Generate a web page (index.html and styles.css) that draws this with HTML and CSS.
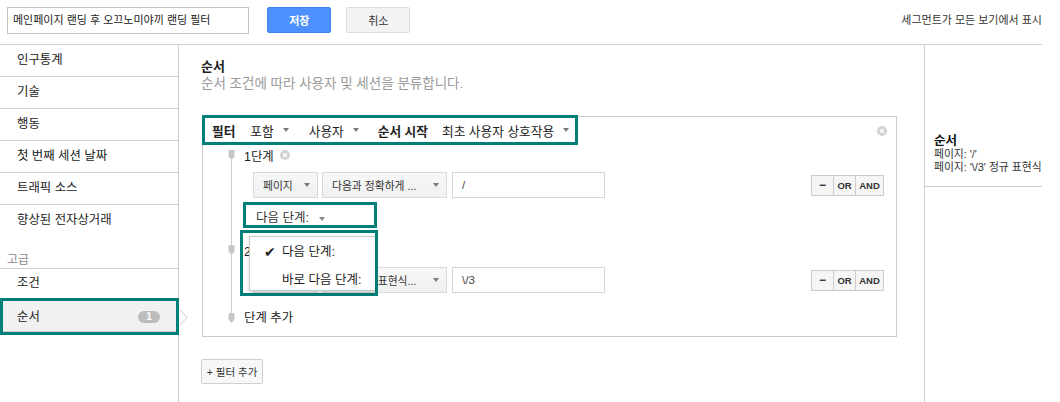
FILE: index.html
```html
<!DOCTYPE html>
<html lang="ko">
<head>
<meta charset="utf-8">
<title>세그먼트 편집</title>
<link rel="stylesheet" href="styles.css">
</head>
<body>
<div class="app">
  <header class="topbar">
    <div class="name-input">메인페이지 랜딩 후 오끄노미야끼 랜딩 필터</div>
    <button class="btn btn-primary">저장</button>
    <button class="btn btn-cancel">취소</button>
    <div class="top-note">세그먼트가 모든 보기에서 표시</div>
  </header>
  <div class="body">
    <nav class="sidebar">
      <div class="nav-item">인구통계</div>
      <div class="nav-item">기술</div>
      <div class="nav-item">행동</div>
      <div class="nav-item">첫 번째 세션 날짜</div>
      <div class="nav-item">트래픽 소스</div>
      <div class="nav-item nav-last">향상된 전자상거래</div>
      <div class="nav-group">고급</div>
      <div class="nav-item nav-cond">조건</div>
      <div class="nav-item nav-selected">
        <span>순서</span>
        <span class="badge">1</span>
        <svg class="chevron" width="9" height="17" viewBox="0 0 9 17"><polyline points="0.5,0.5 8,8.5 0.5,16.5" fill="#fff" stroke="#c8c8c8" stroke-width="1"/></svg>
      </div>
    </nav>

    <main class="main">
      <h1 class="title">순서</h1>
      <p class="subtitle">순서 조건에 따라 사용자 및 세션을 분류합니다.</p>

      <section class="panel">
        <div class="filter-head">
          <span class="strong">필터</span>
          <span class="hsel h-include">포함<i class="caret"></i></span>
          <span class="hsel h-user">사용자<i class="caret"></i></span>
          <span class="strong h-start">순서 시작</span>
          <span class="hsel h-first">최초 사용자 상호작용<i class="caret"></i></span>
        </div>
        <svg class="panel-close" width="10" height="10" viewBox="0 0 10 10"><circle cx="5" cy="5" r="5" fill="#d3d3d3"/><path d="M3.2 3.2 L6.8 6.8 M6.8 3.2 L3.2 6.8" stroke="#fff" stroke-width="1.3"/></svg>

        <div class="steps">
          <div class="step step-first">
            <div class="rail">
              <span class="seg-top"></span>
              <svg class="marker" width="7" height="10" viewBox="0 0 7 10"><path d="M0.5 1 Q0.5 0 1.5 0 L5.5 0 Q6.5 0 6.5 1 L6.5 6.5 L3.5 10 L0.5 6.5 Z" fill="#c6c6c6"/></svg>
              <span class="seg"></span>
            </div>
            <div class="step-body">
              <div class="step-title">1단계<svg class="x-icon" width="10" height="10" viewBox="0 0 10 10"><circle cx="5" cy="5" r="5" fill="#d3d3d3"/><path d="M3.2 3.2 L6.8 6.8 M6.8 3.2 L3.2 6.8" stroke="#fff" stroke-width="1.3"/></svg></div>
              <div class="cond-row">
                <div class="sel sel-dim">페이지<i class="caret"></i></div>
                <div class="sel sel-op">다음과 정확하게 ...<i class="caret"></i></div>
                <div class="val">/</div>
                <div class="logic">
                  <span class="lg lg-minus">−</span>
                  <span class="lg lg-or">OR</span>
                  <span class="lg lg-and">AND</span>
                </div>
              </div>
              <div class="next-step">
                <span>다음 단계:</span><i class="caret"></i>
                <div class="dropdown">
                  <div class="menu">
                    <div class="menu-item"><span class="check">✔</span>다음 단계:</div>
                    <div class="menu-item menu-item2"><span class="check"></span>바로 다음 단계:</div>
                  </div>
                </div>
              </div>
            </div>
          </div>

          <div class="step">
            <div class="rail">
              <span class="seg-top"></span>
              <svg class="marker" width="7" height="10" viewBox="0 0 7 10"><path d="M0.5 1 Q0.5 0 1.5 0 L5.5 0 Q6.5 0 6.5 1 L6.5 6.5 L3.5 10 L0.5 6.5 Z" fill="#c6c6c6"/></svg>
              <span class="seg"></span>
            </div>
            <div class="step-body step-body2">
              <div class="step-title">2단계</div>
              <div class="cond-row">
                <div class="sel sel-dim">페이지<i class="caret"></i></div>
                <div class="sel sel-op sel-regex">다음 정규 표현식...<i class="caret"></i></div>
                <div class="val">\/3</div>
                <div class="logic">
                  <span class="lg lg-minus">−</span>
                  <span class="lg lg-or">OR</span>
                  <span class="lg lg-and">AND</span>
                </div>
              </div>
            </div>
          </div>

          <div class="step step-add">
            <div class="rail">
              <span class="seg-top seg-top-add"></span>
              <svg class="marker" width="7" height="10" viewBox="0 0 7 10"><path d="M0.5 1 Q0.5 0 1.5 0 L5.5 0 Q6.5 0 6.5 1 L6.5 6.5 L3.5 10 L0.5 6.5 Z" fill="#c6c6c6"/></svg>
            </div>
            <div class="add-label">단계 추가</div>
          </div>
        </div>
      </section>

      <button class="add-filter">+ 필터 추가</button>
    </main>

    <aside class="summary">
      <div class="summary-block">
        <div class="summary-title">순서</div>
        <div class="summary-line">페이지: '/'</div>
        <div class="summary-line">페이지: '\/3' 정규 표현식:</div>
      </div>
    </aside>
  </div>
</div>
</body>
</html>
```

FILE: styles.css
```css
* { box-sizing: border-box; }
html, body { margin: 0; padding: 0; background: #fff; }
body {
  font-family: "Liberation Sans", "Noto Sans CJK KR", sans-serif;
  font-size: 12px;
  color: #222;
}
.app {
  width: 1042px;
  height: 402px;
  overflow: hidden;
  display: flex;
  flex-direction: column;
}

/* top bar */
.topbar {
  height: 45px;
  flex-shrink: 0;
  border-bottom: 1px solid #cfcfcf;
  display: flex;
  align-items: flex-start;
  padding: 7px 0 0 7px;
}
.name-input {
  width: 251px;
  height: 27px;
  border: 1px solid #c6c6c6;
  padding-left: 5px;
  font-size: 11px;
  line-height: 25px;
  color: #222;
  white-space: nowrap;
}
.btn {
  width: 64px;
  height: 26px;
  border-radius: 2px;
  font-family: inherit;
  font-size: 11px;
  padding: 0;
  flex-shrink: 0;
}
.btn-primary {
  margin-left: 18px;
  background: #4d90fe;
  border: 1px solid #3f84f3;
  color: #fff;
  font-weight: bold;
}
.btn-cancel {
  margin-left: 15px;
  background: #f3f3f3;
  border: 1px solid #dcdcdc;
  color: #333;
}
.top-note {
  margin-left: 491px;
  margin-top: 4px;
  font-size: 11px;
  color: #333;
  white-space: nowrap;
  flex-shrink: 0;
}

.body {
  flex: 1;
  display: flex;
  min-height: 0;
}

/* sidebar */
.sidebar {
  width: 179px;
  flex-shrink: 0;
  border-right: 1px solid #cdcdcd;
}
.nav-item {
  height: 32px;
  border-bottom: 1px solid #cdcdcd;
  padding-left: 17px;
  line-height: 31px;
  font-size: 12.4px;
  color: #222;
  white-space: nowrap;
}
.nav-last { border-bottom: none; }
.nav-group {
  height: 32px;
  border-bottom: 1px solid #cdcdcd;
  padding: 0 0 1px 7px;
  display: flex;
  align-items: flex-end;
  line-height: 14px;
  font-size: 12px;
  color: #8a8a8a;
}
.nav-cond {
  height: 29px;
  line-height: 29px;
  border-bottom: none;
}
.nav-selected {
  position: relative;
  height: 37px;
  margin-right: -1px;
  border: 3px solid #007f79;
  background: #f1f1f1;
  box-shadow: inset 0 -1px 0 #cfcfcf;
  padding-left: 14px;
  display: flex;
  align-items: center;
  line-height: 16px;
}
.badge {
  margin-left: auto;
  margin-right: 16px;
  width: 22px;
  height: 12px;
  border-radius: 6px;
  background: #bcbcbc;
  color: #fff;
  font-size: 10px;
  font-weight: bold;
  line-height: 12px;
  text-align: center;
}
.chevron {
  position: absolute;
  right: -12px;
  top: 8px;
}

/* main */
.main {
  flex: 1;
  min-width: 0;
  padding: 14px 0 0 22px;
}
.title {
  margin: 0;
  font-size: 13px;
  line-height: 16px;
  font-weight: bold;
  color: #222;
}
.subtitle {
  margin: 1px 0 0;
  font-size: 13.5px;
  line-height: 16px;
  color: #9a9a9a;
}
.panel {
  position: relative;
  width: 695px;
  margin: 24px 0 0 1px;
  border: 1px solid #cbcbcb;
}
.filter-head {
  display: inline-flex;
  align-items: center;
  height: 30px;
  margin: -2px 0 0 -1px;
  border: 3px solid #007f79;
  padding: 0 6px 0 7px;
  font-size: 12.7px;
  color: #222;
  white-space: nowrap;
}
.strong { font-weight: bold; }
.hsel { display: inline-flex; align-items: center; }
.h-include { margin-left: 15px; }
.h-user { margin-left: 20px; }
.h-start { margin-left: 19px; }
.h-first { margin-left: 14px; }
.caret {
  display: inline-block;
  width: 0;
  height: 0;
  border-left: 3.5px solid transparent;
  border-right: 3.5px solid transparent;
  border-top: 4px solid #7a7a7a;
  margin-left: 9px;
}
.panel-close {
  position: absolute;
  right: 9px;
  top: 9px;
}

.steps {
  padding: 0 0 10px 25px;
}
.step { display: flex; }
.rail {
  width: 7px;
  margin-right: 9px;
  display: flex;
  flex-direction: column;
  align-items: center;
  flex-shrink: 0;
}
.seg-top {
  display: block;
  width: 1px;
  height: 5px;
  background: #cbcbcb;
}
.step-first .seg-top { background: transparent; }
.seg-top-add { height: 3px; }
.marker { display: block; flex-shrink: 0; }
.seg {
  display: block;
  width: 1px;
  flex: 1;
  background: #cbcbcb;
}
.step-body {
  flex: 1;
  padding: 2px 0 12px;
}
.step-body2 { padding-bottom: 17px; }
.step-title {
  display: flex;
  align-items: center;
  height: 18px;
  font-size: 12.4px;
  color: #222;
}
.x-icon { margin-left: 6px; margin-top: -3px; }

.cond-row {
  display: flex;
  align-items: center;
  height: 26px;
  margin-top: 7px;
  padding-left: 9px;
}
.sel {
  height: 26px;
  border: 1px solid #dadada;
  background: linear-gradient(#f8f8f8, #f0f0f0);
  display: flex;
  align-items: center;
  justify-content: space-between;
  padding: 0 7px 0 9px;
  font-size: 10.8px;
  color: #333;
  white-space: nowrap;
  overflow: hidden;
}
.sel-dim { width: 65px; }
.sel-op { width: 125px; margin-left: 4px; }
.val {
  width: 153px;
  height: 26px;
  margin-left: 5px;
  border: 1px solid #d6d6d6;
  padding-left: 9px;
  line-height: 24px;
  font-size: 11.5px;
  color: #444;
}
.logic {
  margin-left: auto;
  margin-right: 12px;
  display: flex;
  height: 21px;
  border: 1px solid #cbcbcb;
  background: #f5f5f5;
}
.lg {
  display: flex;
  align-items: center;
  justify-content: center;
  font-family: "Liberation Sans", sans-serif;
  font-size: 9.5px;
  font-weight: bold;
  color: #333;
}
.lg + .lg { border-left: 1px solid #cbcbcb; }
.lg-minus { width: 21px; font-size: 12px; }
.lg-or { width: 22px; }
.lg-and { width: 28px; }

.next-step {
  position: relative;
  display: flex;
  align-items: flex-start;
  width: 134px;
  height: 26px;
  margin: 4px 0 0 -1px;
  border: 3px solid #007f79;
  padding: 5px 0 0 10px;
  line-height: 16px;
  font-size: 12.5px;
  color: #333;
}
.next-step .caret { margin: 7px 0 0 10px; border-top-color: #888; }
.dropdown {
  position: absolute;
  left: -6px;
  top: 25px;
  width: 138px;
  height: 66px;
  border: 3px solid #007f79;
  background: transparent;
  padding: 3px 0 2px 6px;
  z-index: 5;
}
.menu {
  height: 100%;
  background: #fff;
  border: 1px solid #c8c8c8;
  border-right: none;
  box-shadow: 0 2px 4px rgba(0, 0, 0, 0.15);
}
.menu-item {
  display: flex;
  align-items: center;
  height: 20px;
  margin-top: 5px;
  padding-left: 14px;
  font-size: 12.5px;
  color: #222;
  white-space: nowrap;
}
.menu-item2 { margin-top: 8px; }
.check {
  display: inline-block;
  width: 18px;
  font-family: "DejaVu Sans", sans-serif;
  font-size: 14px;
  line-height: 16px;
  color: #222;
}

.step-add { align-items: flex-start; }
.add-label {
  line-height: 16px;
  font-size: 12.4px;
  color: #222;
}

.add-filter {
  display: block;
  margin-top: 22px;
  width: 62px;
  height: 25px;
  border: 1px solid #cfcfcf;
  border-radius: 2px;
  background: #f7f7f7;
  font-family: inherit;
  font-size: 10.5px;
  color: #333;
  padding: 0;
}

/* right summary */
.summary {
  width: 118px;
  flex-shrink: 0;
  border-left: 1px solid #cdcdcd;
  overflow: hidden;
}
.summary-block {
  border-bottom: 1px solid #cdcdcd;
  padding: 89px 0 12px 9px;
  white-space: nowrap;
}
.summary-title {
  font-size: 12.5px;
  font-weight: bold;
  line-height: 14px;
  color: #111;
}
.summary-line {
  font-size: 10.8px;
  line-height: 13px;
  color: #333;
}
```
